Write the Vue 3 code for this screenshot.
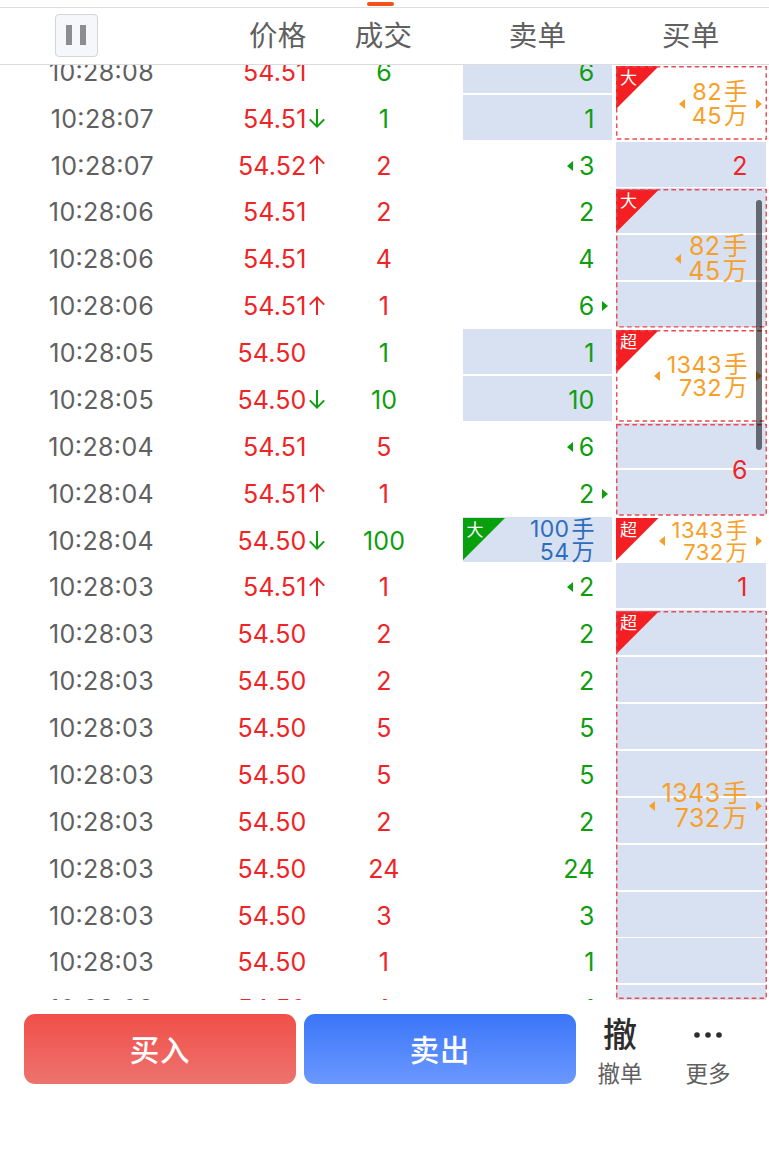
<template>
  <div class="page">
    <div class="tabs"><span class="tab-line"></span></div>
    <header class="header">
      <div class="head-time">
        <button class="pause" type="button"><i></i><i></i></button>
      </div>
      <span>价格</span>
      <span>成交</span>
      <span>卖单</span>
      <span>买单</span>
    </header>

    <main class="list">
      <div class="list-inner">
        <div class="rows">
          <div v-for="(row, i) in rows" :key="i" class="row">
            <span class="time">{{ row.time }}</span>
            <span class="price">{{ row.price }}</span>
            <span class="trend">
              <svg v-if="row.trend" :class="row.trend" width="18" height="20" viewBox="0 0 18 20">
                <path d="M9 19V1.6M1.8 8.6L9 1.4l7.2 7.2" />
              </svg>
            </span>
            <span class="volume" :class="row.color">{{ row.volume }}</span>
            <div class="sell" :class="{ filled: row.filled }">
              <span v-if="row.tag" class="tag tag-green"><b>{{ row.tag }}</b></span>
              <div v-if="row.tag" class="amount blue">
                <p>100<span class="unit">手</span></p>
                <p>54<span class="unit">万</span></p>
              </div>
              <template v-else>
                <i v-if="row.left" class="caret caret-left"></i>
                <span>{{ row.sell }}</span>
                <i v-if="row.right" class="caret caret-right"></i>
              </template>
            </div>
          </div>
        </div>

        <div class="buys">
          <div
            v-for="(order, i) in orders"
            :key="i"
            class="order"
            :class="{ first: i === 0 }"
            :style="{ height: order.span * 46.88 + 'px' }"
          >
            <div v-for="n in Math.ceil(order.span)" :key="n" class="fill" :class="{ filled: order.filled }"></div>
            <span v-if="order.tag" class="tag tag-red"><b>{{ order.tag }}</b></span>
            <svg v-if="order.dashed" class="outline">
              <rect x="0.75" y="0.75" />
            </svg>
            <div class="order-text">
              <span v-if="!order.hands" class="red">{{ order.value }}</span>
              <div v-else class="amount orange" :style="{ fontSize: order.size + 'px' }">
                <i v-if="order.left" class="caret caret-left"></i>
                <p>{{ order.hands }}<span class="unit">手</span></p>
                <p>{{ order.money }}<span class="unit">万</span></p>
              </div>
              <i v-if="order.right" class="caret caret-right"></i>
            </div>
          </div>
        </div>
      </div>
      <div class="scrollbar"></div>
    </main>

    <footer class="footer">
      <button class="btn btn-buy" type="button">买入</button>
      <button class="btn btn-sell" type="button">卖出</button>
      <div class="action action-cancel">
        <span class="action-icon">撤</span>
        <span>撤单</span>
      </div>
      <div class="action">
        <span class="action-icon">
          <svg width="30" height="8" viewBox="0 0 30 8">
            <circle cx="4" cy="4" r="2.8" />
            <circle cx="15" cy="4" r="2.8" />
            <circle cx="26" cy="4" r="2.8" />
          </svg>
        </span>
        <span>更多</span>
      </div>
    </footer>
  </div>
</template>

<script setup>
import { ref } from "vue";

const rows = ref([
  { time: "10:28:08", price: "54.51", volume: 6, color: "green", sell: 6, filled: true },
  { time: "10:28:07", price: "54.51", trend: "down", volume: 1, color: "green", sell: 1, filled: true },
  { time: "10:28:07", price: "54.52", trend: "up", volume: 2, color: "red", sell: 3, left: true },
  { time: "10:28:06", price: "54.51", volume: 2, color: "red", sell: 2 },
  { time: "10:28:06", price: "54.51", volume: 4, color: "red", sell: 4 },
  { time: "10:28:06", price: "54.51", trend: "up", volume: 1, color: "red", sell: 6, right: true },
  { time: "10:28:05", price: "54.50", volume: 1, color: "green", sell: 1, filled: true },
  { time: "10:28:05", price: "54.50", trend: "down", volume: 10, color: "green", sell: 10, filled: true },
  { time: "10:28:04", price: "54.51", volume: 5, color: "red", sell: 6, left: true },
  { time: "10:28:04", price: "54.51", trend: "up", volume: 1, color: "red", sell: 2, right: true },
  { time: "10:28:04", price: "54.50", trend: "down", volume: 100, color: "green", filled: true, tag: "大" },
  { time: "10:28:03", price: "54.51", trend: "up", volume: 1, color: "red", sell: 2, left: true },
  { time: "10:28:03", price: "54.50", volume: 2, color: "red", sell: 2 },
  { time: "10:28:03", price: "54.50", volume: 2, color: "red", sell: 2 },
  { time: "10:28:03", price: "54.50", volume: 5, color: "red", sell: 5 },
  { time: "10:28:03", price: "54.50", volume: 5, color: "red", sell: 5 },
  { time: "10:28:03", price: "54.50", volume: 2, color: "red", sell: 2 },
  { time: "10:28:03", price: "54.50", volume: 24, color: "red", sell: 24 },
  { time: "10:28:03", price: "54.50", volume: 3, color: "red", sell: 3 },
  { time: "10:28:03", price: "54.50", volume: 1, color: "red", sell: 1 },
  { time: "10:28:03", price: "54.50", volume: 1, color: "red", sell: 1 },
]);

const orders = ref([
  { span: 2, dashed: true, tag: "大", hands: "82", money: "45", left: true, right: true, size: 23.5 },
  { span: 1, filled: true, value: 2 },
  { span: 3, dashed: true, filled: true, tag: "大", hands: "82", money: "45", left: true, size: 25 },
  { span: 2, dashed: true, tag: "超", hands: "1343", money: "732", left: true, right: true, size: 23.5 },
  { span: 2, dashed: true, filled: true, value: 6 },
  { span: 1, tag: "超", hands: "1343", money: "732", left: true, right: true, size: 22 },
  { span: 1, filled: true, value: 1 },
  { span: 8.32, dashed: true, filled: true, tag: "超", hands: "1343", money: "732", left: true, right: true, size: 25 },
]);
</script>

<style>
body {
  background: #fff;
}
</style>

<style scoped>
.page {
  width: 769px;
  height: 1165px;
  overflow: hidden;
  background: #fff;
  color: #606060;
  font-family: Inter, "Noto Sans CJK SC", sans-serif;
  font-size: 25px;
  font-feature-settings: "calt" 1;
}

p {
  margin: 0;
}

button {
  border: 0;
  padding: 0;
  font-family: inherit;
}

.tabs {
  height: 7px;
  display: flex;
  border-bottom: 1px solid #dedee0;
}

.tab-line {
  width: 27px;
  height: 4px;
  margin: 2px 0 0 367px;
  border-radius: 2px;
  background: #f4511a;
}

.header {
  height: 56px;
  display: grid;
  grid-template-columns: 225px 105.5px 106px 202px 104.5px;
  align-items: center;
  border-bottom: 1px solid #dcdcde;
  font-size: 28.5px;
  line-height: 40px;
  letter-spacing: 0.3px;
  text-align: center;
}

.head-time {
  display: flex;
  padding-left: 54.5px;
  padding-bottom: 2px;
}

.pause {
  width: 43px;
  height: 43px;
  box-sizing: border-box;
  border: 1px solid #d3d5db;
  border-radius: 4px;
  background: #f5f7fa;
  display: flex;
  justify-content: center;
  align-items: center;
  gap: 8px;
}

.pause i {
  width: 6px;
  height: 20px;
  background: #8c8c91;
}

.list {
  position: relative;
  height: 935px;
  margin-bottom: 1px;
  overflow: hidden;
}

.list-inner {
  display: flex;
  gap: 4px;
  margin-top: -17.2px;
}

.rows {
  width: 612px;
}

.row {
  height: 46.88px;
  display: grid;
  grid-template-columns: 154px 152.5px 20.5px 114px 21.5px 149.5px;
  align-items: center;
  letter-spacing: 0.15px;
}

.time,
.price,
.volume {
  padding-top: 1px;
}

.time {
  text-align: right;
  letter-spacing: 0.35px;
}

.price {
  text-align: right;
  color: #ee2427;
}

.trend {
  display: flex;
  padding-left: 1px;
}

.trend svg {
  fill: none;
  stroke-width: 2;
}

.trend .up {
  stroke: #ee2427;
}

.trend .down {
  stroke: #0f9d10;
  transform: rotate(180deg);
}

.volume {
  text-align: center;
}

.sell {
  position: relative;
  grid-column: 6;
  align-self: start;
  height: 45px;
  padding: 3px 17.5px 0 0;
  box-sizing: border-box;
  display: flex;
  align-items: center;
  justify-content: flex-end;
  color: #0f9d10;
}

.filled {
  background: #d7e1f2;
}

.sell .caret-left {
  margin-right: 6px;
  border-right-color: #0f9d10;
}

/* hangs in the right padding so the number keeps its column */
.sell .caret-right {
  position: absolute;
  right: 4px;
  border-left-color: #0f9d10;
}

.caret {
  width: 0;
  height: 0;
  border: 5px solid transparent;
}

.caret-left {
  border-left: 0;
  border-right: 6px solid #f7a029;
}

.caret-right {
  border-right: 0;
  border-left: 6px solid #f7a029;
}

.tag {
  position: absolute;
  left: 0;
  top: 1px;
  width: 43px;
  height: 43px;
  clip-path: polygon(0 0, 100% 0, 0 100%);
  color: #fff;
}

.tag b {
  display: block;
  padding: 1px 0 0 4px;
  font-size: 17px;
  line-height: 22px;
  font-weight: 400;
  letter-spacing: 0;
}

.tag-red {
  background: #f31f22;
}

.tag-green {
  background: #08a00c;
}

.red {
  color: #ee2427;
}

.green {
  color: #0f9d10;
}

.amount {
  position: relative;
  line-height: 1;
  letter-spacing: 0.4px;
  text-align: right;
}

.amount p {
  white-space: nowrap;
}

.unit {
  margin-left: 2px;
  letter-spacing: 0;
}

.blue {
  font-size: 23px;
  color: #2e6dbd;
}

.orange {
  color: #f7a029;
}

.order-text .caret {
  position: absolute;
  top: 50%;
  margin-top: -5px;
}

.order-text .caret-left {
  right: calc(100% + 7px);
}

.order-text .caret-right {
  right: -14px;
}

.buys {
  width: 151px;
}

.order {
  position: relative;
  overflow: hidden;
}

.fill {
  width: 150px;
  height: 45px;
  margin-bottom: 1.88px;
}

.order-text {
  position: absolute;
  inset: 1px 19.5px 0 0;
  display: flex;
  align-items: center;
  justify-content: flex-end;
}

.outline {
  position: absolute;
  left: 0;
  top: 1px;
  width: 151px;
  height: calc(100% - 2px);
}

.outline rect {
  width: calc(100% - 1.5px);
  height: calc(100% - 1.5px);
  fill: none;
  stroke: #ea4a50;
  stroke-width: 1.4;
  stroke-dasharray: 4.6 3.2;
}

/* the first order is partly scrolled away, its box sticks to the visible part */
.first .tag,
.first .order-text {
  top: 18.3px;
}

.first .outline {
  top: 18.3px;
  height: calc(100% - 20px);
}

.scrollbar {
  position: absolute;
  left: 756px;
  top: 135px;
  width: 6px;
  height: 250px;
  border-radius: 3px;
  background: rgba(0, 0, 0, 0.54);
}

.footer {
  display: flex;
  padding: 13px 0 0 24px;
}

.btn {
  width: 272px;
  height: 70px;
  margin-right: 8px;
  padding-bottom: 3px;
  border-radius: 11px;
  color: #fff;
  font-size: 29.5px;
  font-weight: 500;
  letter-spacing: 0.8px;
}

.btn-buy {
  background: linear-gradient(#f14f49, #ed736e);
}

.btn-sell {
  background: linear-gradient(#3b75f8, #6b98ff);
}

.action {
  width: 88px;
  display: flex;
  flex-direction: column;
  align-items: center;
  font-size: 22.5px;
  line-height: 36px;
}

.action-cancel {
  margin-left: -8px;
}

.action-icon {
  height: 42px;
  display: flex;
  align-items: center;
  color: #2d2d2d;
  fill: #2d2d2d;
  font-size: 34px;
  font-weight: 500;
}
</style>
